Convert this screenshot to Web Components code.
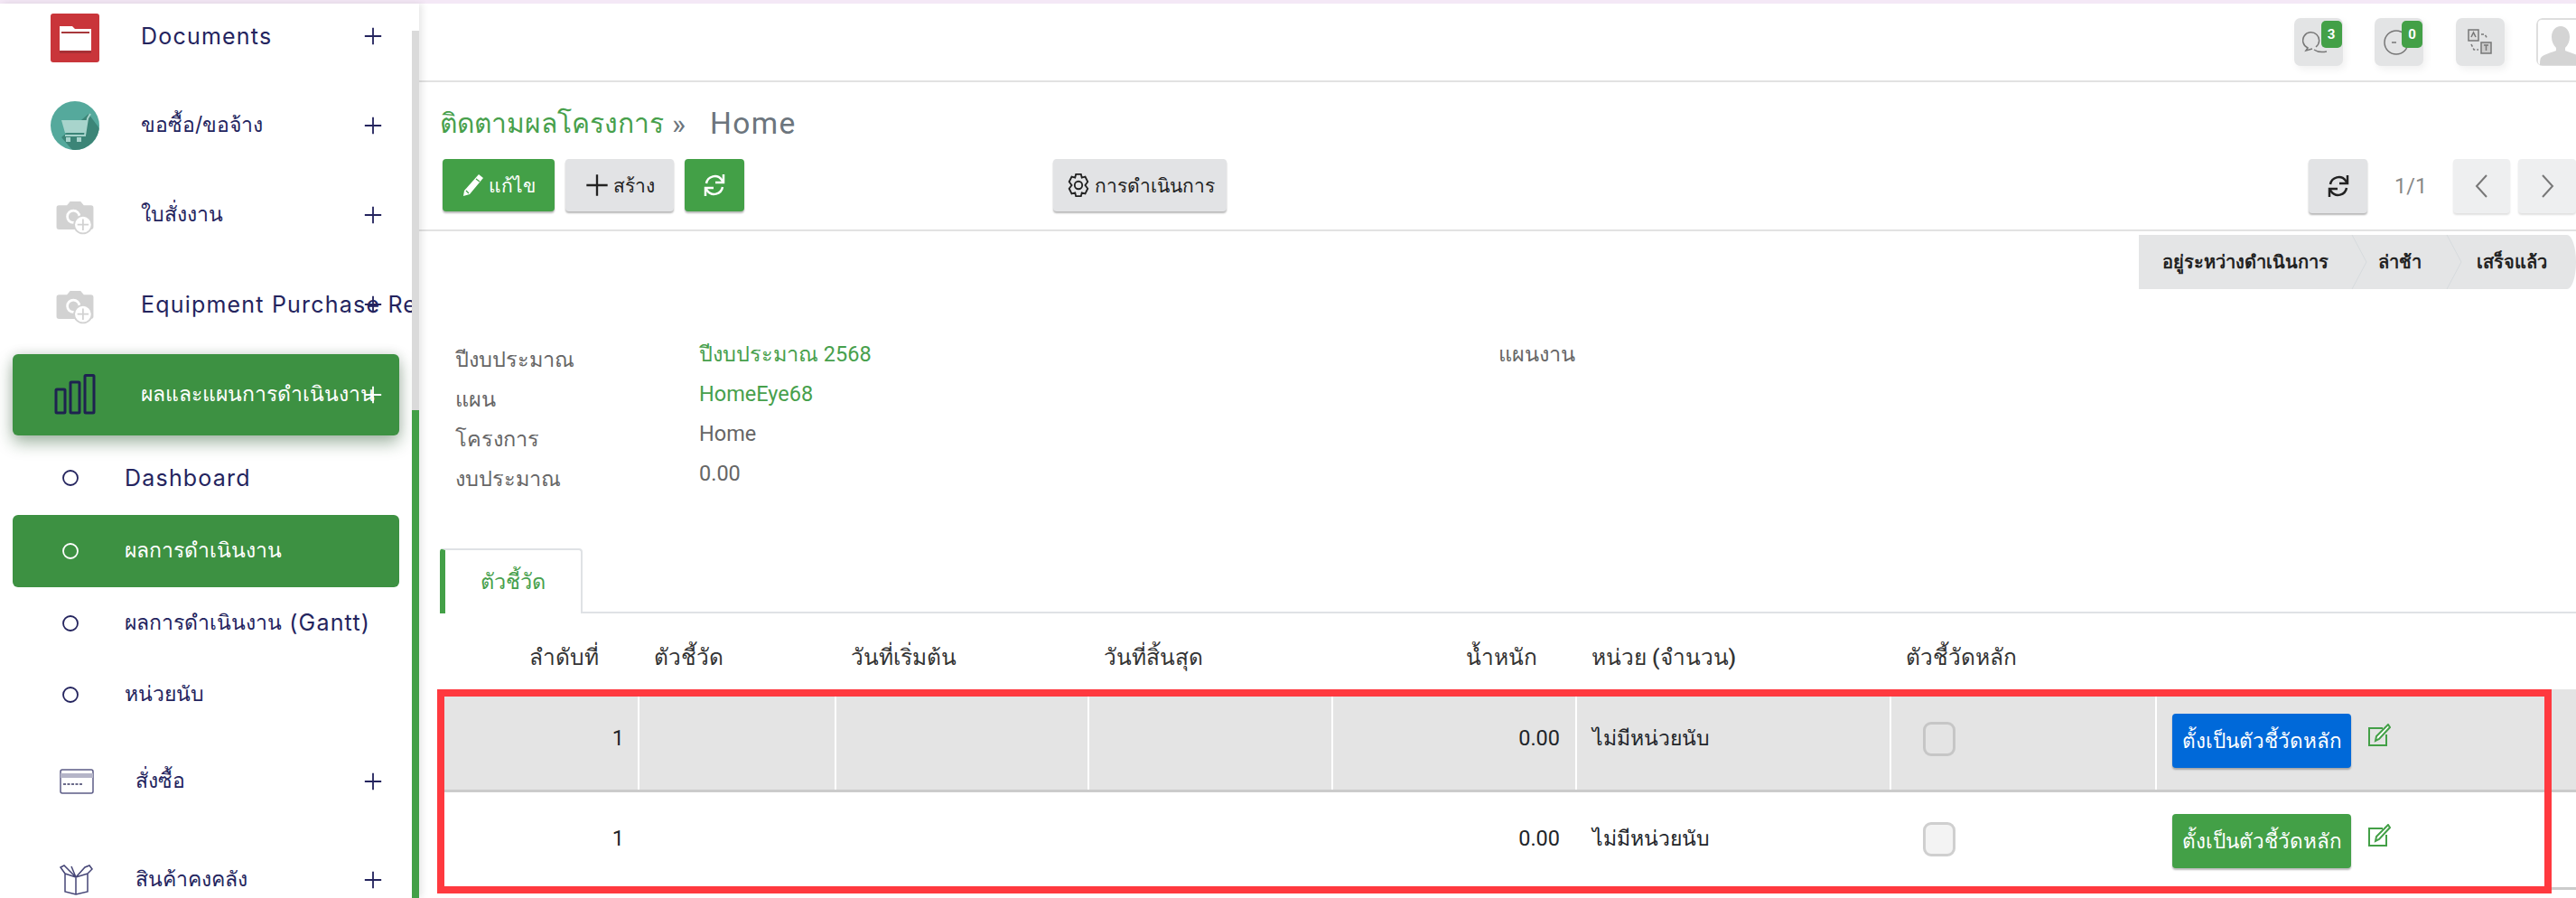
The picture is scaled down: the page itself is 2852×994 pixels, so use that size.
<!DOCTYPE html>
<html lang="th">
<head>
<meta charset="utf-8">
<title>ติดตามผลโครงการ</title>
<style>
    html, body { margin: 0; height: 100%; background: #fff; overflow: hidden; }
    body { font-family: Roboto, "Noto Sans", sans-serif; }
</style>
</head>
<body>
<x-app>
    <x-sidebar slot="side">
        <x-nav-item label="Documents" plus x="142" style="margin-top:-14px"><x-ico name="docs"></x-ico></x-nav-item>
        <x-nav-item label="ขอซื้อ/ขอจ้าง" plus x="142"><x-ico name="cart"></x-ico></x-nav-item>
        <x-nav-item label="ใบสั่งงาน" plus x="142"><x-ico name="cam"></x-ico></x-nav-item>
        <x-nav-item label="Equipment Purchase Request" plus x="142"><x-ico name="cam"></x-ico></x-nav-item>
        <x-nav-item label="ผลและแผนการดำเนินงาน" plus x="142" active raised style="margin-top:6px;height:90px"><x-ico name="bars"></x-ico></x-nav-item>
        <x-nav-item label="Dashboard" x="124" style="margin-top:7px;height:80px"><x-ico name="dot"></x-ico></x-nav-item>
        <x-nav-item label="ผลการดำเนินงาน" x="124" active style="margin-top:1px;height:80px"><x-ico name="dot"></x-ico></x-nav-item>
        <x-nav-item label="ผลการดำเนินงาน (Gantt)" x="124" style="height:79px"><x-ico name="dot"></x-ico></x-nav-item>
        <x-nav-item label="หน่วยนับ" x="124" style="height:80px"><x-ico name="dot"></x-ico></x-nav-item>
        <x-nav-item label="สั่งซื้อ" plus x="136" style="margin-top:6px"><x-ico name="card"></x-ico></x-nav-item>
        <x-nav-item label="สินค้าคงคลัง" plus x="136" style="margin-top:10px"><x-ico name="box"></x-ico></x-nav-item>
    </x-sidebar>

    <x-topbar>
        <x-top-icon name="chat" badge="3"></x-top-icon>
        <x-top-icon name="clock" badge="0"></x-top-icon>
        <x-top-icon name="lang"></x-top-icon>
        <x-top-icon name="user"></x-top-icon>
    </x-topbar>

    <x-control-panel>
        <span slot="crumb">ติดตามผลโครงการ</span>
        <x-btn kind="green" w="124"><x-ico name="pencil" size="26"></x-ico>แก้ไข</x-btn>
        <x-btn kind="gray" w="120"><x-ico name="plus" size="28"></x-ico>สร้าง</x-btn>
        <x-btn kind="green" w="66"><x-ico name="sync" size="30"></x-ico></x-btn>
        <x-btn kind="gray" w="192" style="margin-left:330px"><x-ico name="gear" size="28"></x-ico>การดำเนินการ</x-btn>
        <x-btn slot="pager" kind="gray" w="65" style="height:60px"><x-ico name="sync" size="30"></x-ico></x-btn>
        <span slot="pager" class="count">1/1</span>
        <x-btn slot="pager" kind="pale" w="63" style="height:60px"><x-ico name="prev" size="26"></x-ico></x-btn>
        <x-btn slot="pager" kind="pale" w="64" style="height:60px"><x-ico name="next" size="26"></x-ico></x-btn>
    </x-control-panel>

    <x-status-bar>
        <x-status-step w="236">อยู่ระหว่างดำเนินการ</x-status-step>
        <x-status-step w="105">ล่าช้า</x-status-step>
        <x-status-step w="143" last>เสร็จแล้ว</x-status-step>
    </x-status-bar>

    <x-fields>
        <x-field label="ปีงบประมาณ" kind="link">ปีงบประมาณ 2568</x-field>
        <x-field label="แผนงาน" second></x-field>
        <x-field label="แผน" kind="link">HomeEye68</x-field>
        <x-field label="โครงการ">Home</x-field>
        <x-field label="งบประมาณ">0.00</x-field>
    </x-fields>

    <x-tabs label="ตัวชี้วัด"></x-tabs>
    <x-kpi-table></x-kpi-table>
</x-app>

<script>
const NAVY = '#24245e'

const ICONS = {
    docs: `<svg viewBox="0 -2 54 54" width="54" height="54"><rect width="54" height="54" rx="3" fill="#c9353a"/><path d="M10 14h14l3 3h18v24H10z" fill="#fff"/><rect x="12" y="20" width="31" height="2" fill="#a8383c"/><rect x="10" y="41" width="35" height="3" fill="#a83035"/></svg>`,
    cart: `<svg viewBox="0 0 54 54" width="54" height="54"><defs><clipPath id="c"><circle cx="27" cy="27" r="27"/></clipPath></defs><circle cx="27" cy="27" r="27" fill="#55a99c"/><path d="M42 14 54 30v24H24L12 40z" fill="#3c8577" clip-path="url(#c)"/><path d="M12 21h29l-3 14H16z" fill="#a8d4cc"/><path d="M16 38h22l3-19 3-5" fill="none" stroke="#a8d4cc" stroke-width="2"/><rect x="17" y="40" width="5" height="5" fill="#a8d4cc"/><rect x="29" y="40" width="5" height="5" fill="#a8d4cc"/></svg>`,
    cam: `<svg viewBox="0 -3 54 54" width="48" height="48"><path d="M7 12h10l4-5h13l4 5h9a3 3 0 0 1 3 3v24a3 3 0 0 1-3 3H7a3 3 0 0 1-3-3V15a3 3 0 0 1 3-3z" fill="#d2d2d2"/><circle cx="25" cy="26" r="9" fill="#fff"/><circle cx="25" cy="26" r="6" fill="#d2d2d2"/><circle cx="37" cy="36" r="11" fill="#fff" stroke="#d2d2d2" stroke-width="2"/><path d="M37 29v14M30 36h14" stroke="#d2d2d2" stroke-width="2"/></svg>`,
    bars: `<svg viewBox="0 0 46 46" width="46" height="46" fill="none" stroke="#1e2250" stroke-width="3"><rect x="2" y="17" width="10" height="26" rx="1"/><rect x="18" y="9" width="10" height="34" rx="1"/><rect x="34" y="1.500" width="10" height="41.500" rx="1"/></svg>`,
    dot: `<svg viewBox="0 0 18 18" width="18" height="18" fill="none" stroke="currentColor" stroke-width="1.800"><circle cx="9" cy="9" r="8"/></svg>`,
    card: `<svg viewBox="0 0 38 28" width="38" height="28" fill="none"><rect x="1" y="1" width="36" height="26" rx="2" stroke="${NAVY}" stroke-opacity=".75" stroke-width="1.500"/><rect x="1" y="5" width="36" height="5" fill="#b5b5c8"/><path d="M4 17h22" stroke="#6a6a8a" stroke-width="2" stroke-dasharray="3 1.500"/></svg>`,
    box: `<svg viewBox="0 0 38 34" width="38" height="34" fill="none" stroke="${NAVY}" stroke-opacity=".85" stroke-width="1.500"><path d="M6 10v20l12 3 13-3V10M6 10l12 4 13-4M18 14v19M6 10 1 3l4-2 13 13M31 10l5-5-3-4-5 2-10 11M18 14l-5-12"/></svg>`,
    plus: `<svg viewBox="0 0 24 24" width="100%" height="100%" fill="none" stroke="currentColor" stroke-width="2"><path d="M12 2v20M2 12h20"/></svg>`,
    pencil: `<svg viewBox="0 0 24 26" width="100%" height="100%"><path d="M18 1l5 4L8 23l-7 2 1-6z" fill="#fff"/><path d="M15 6l4 3M4 19l3 3" stroke="#43a047" stroke-width="1.300"/></svg>`,
    sync: `<svg viewBox="0 0 30 30" width="100%" height="100%" fill="none" stroke="currentColor" stroke-width="2.500"><path d="M6 13a9.500 9.500 0 0 1 17-4l2 3"/><path d="M25 3v9h-9"/><path d="M24 17a9.500 9.500 0 0 1-17 4l-2-3"/><path d="M5 27v-9h9"/></svg>`,
    gear: `<svg viewBox="0 0 26 30" width="100%" height="100%" fill="none" stroke="#222" stroke-width="2"><path d="M10 2h6l1 4 4-1 3 6-3 4 3 4-3 6-4-1-1 4h-6l-1-4-4 1-3-6 3-4-3-4 3-6 4 1z"/><circle cx="13" cy="15" r="4.500"/></svg>`,
    prev: `<svg viewBox="0 0 26 26" width="100%" height="100%" fill="none" stroke="#777" stroke-width="2"><path d="M18 1 7 13l11 12"/></svg>`,
    next: `<svg viewBox="0 0 26 26" width="100%" height="100%" fill="none" stroke="#777" stroke-width="2"><path d="M8 1l11 12L8 25"/></svg>`,
    edit: `<svg viewBox="0 0 26 26" width="26" height="26" fill="none" stroke="#43a047" stroke-width="2"><path d="M17 5H2v19h19V12"/><path d="M23 1l2 3L13 17l-4 2 1-5z" fill="#fff"/></svg>`,
    chat: `<svg viewBox="0 0 30 28" width="30" height="28" fill="none" stroke="#777" stroke-width="1.500"><path d="M15 19a9 9 0 1 0-9 1l-2 3 7-2"/><path d="M13 22c4 3 9 3 14 2"/></svg>`,
    clock: `<svg viewBox="0 0 30 30" width="30" height="30" fill="none" stroke="#777" stroke-width="1.500"><circle cx="15" cy="15" r="13"/><path d="M10 15h5"/></svg>`,
    lang: `<svg viewBox="0 0 28 30" width="28" height="30" fill="none" stroke="#777" stroke-width="1.500"><rect x="1" y="1" width="11" height="12" fill="#ddd"/><rect x="15" y="15" width="11" height="12" fill="#ccc"/><path d="M4 9l2.500-5L9 9M18 18h5M20.500 18v6"/><path d="M15 6h4l3 5M4 17l3 6h5" stroke-dasharray="3 2"/></svg>`,
    user: `<svg viewBox="0 0 54 54" width="54" height="54"><rect x="1" y="1" width="60" height="52" rx="5" fill="#fff" stroke="#dedede" stroke-width="2"/><path d="M27 9c6 0 10 5 10 12 0 5-2 9-5 12v3c4 2 14 4 17 8 1 2 1 6 1 8H4c0-2 0-6 1-8 3-4 13-6 17-8v-3c-3-3-5-7-5-12 0-7 4-12 10-12z" fill="#d4d4d4"/></svg>`,
}

class Shadowed extends HTMLElement {
    static css = ''
    render () { return '<slot></slot>' }
    connectedCallback () {
        if (this.shadowRoot) return
        const template = document.createElement('template')
        template.innerHTML = `<style>${this.constructor.css}</style>${this.render()}`
        this.attachShadow({mode: 'open'}).appendChild(template.content)
    }
}

customElements.define('x-ico', class extends Shadowed {
    static css = `
        :host { display: inline-flex; align-items: center; justify-content: center; flex: none; }
        svg { overflow: visible; }
    `
    render () {
        const size = this.getAttribute('size')
        if (size) this.style.width = this.style.height = size + 'px'
        return ICONS[this.getAttribute('name')]
    }
})

customElements.define('x-app', class extends Shadowed {
    static css = `
        :host { display: grid; grid-template-columns: 464px 1fr; height: 100%; border-top: 4px solid #f4e8f6; box-sizing: border-box; }
        .side { height: 100%; overflow: hidden; box-shadow: 3px 0 8px rgba(0,0,0,.1); position: relative; z-index: 1; }
        .main { display: flex; flex-direction: column; min-width: 0; height: 100%; overflow: hidden; }
    `
    render () { return `<div class="side"><slot name="side"></slot></div><div class="main"><slot></slot></div>` }
})

customElements.define('x-sidebar', class extends Shadowed {
    static css = `
        :host { display: grid; grid-template-columns: 456px 8px; height: 100%; font-family: Inter, "Noto Sans", sans-serif; }
        nav { overflow: hidden; display: flex; flex-direction: column; height: 100%; }
        .bar { background: linear-gradient(#fff 30px, #dadada 30px, #dadada 450px, #43a047 450px); }
    `
    render () { return `<nav><slot></slot></nav><div class="bar"></div>` }
})

customElements.define('x-nav-item', class extends Shadowed {
    static css = `
        :host { display: flex; align-items: center; flex: none; position: relative; height: 99px; margin: 0 14px; width: 428px; color: ${NAVY}; font-size: 23px; border-radius: 6px; white-space: nowrap; }
        :host([active]) { background: #3d9142; color: #fff; }
        :host([raised]) { box-shadow: 0 8px 18px rgba(20,70,25,.4), 0 -2px 12px rgba(0,0,0,.08); }
        .icon { flex: none; display: flex; align-items: center; justify-content: center; }
        .text { margin-bottom: 2px; }
        .latin { font-size: 25px; letter-spacing: 1.200px; position: relative; top: 1px; }
        .plus { position: absolute; left: 388px; top: 50%; width: 22px; height: 22px; margin-top: -11px; }
    `
    render () {
        const x = +this.getAttribute('x')
        const c = x === 142 ? 69 : x === 124 ? 64 : 71
        const label = this.getAttribute('label').replace(/[A-Za-z() ]+/g, m => `<span class="latin">${m}</span>`)
        return `<span class="icon" style="margin-left:${c - 40}px;width:80px;margin-right:${x - c - 40}px"><slot></slot></span>
            <span class="text">${label}</span>
            ${this.hasAttribute('plus') ? `<span class="plus">${ICONS.plus}</span>` : ''}`
    }
})

customElements.define('x-topbar', class extends Shadowed {
    static css = `:host { display: flex; justify-content: flex-end; gap: 35.500px; flex: none; height: 87px; box-sizing: border-box; padding: 16px 0 0; margin-right: -10px; border-bottom: 2px solid #e2e2e2; }`
})

customElements.define('x-top-icon', class extends Shadowed {
    static css = `
        :host { display: flex; align-items: center; justify-content: center; position: relative; width: 54px; height: 53px; background: #e3e4e5; border-radius: 7px; box-shadow: 3px 4px 8px rgba(0,0,0,.06); }
        :host([name=user]) { background: #fff; box-shadow: none; overflow: hidden; }
        .badge { position: absolute; top: 3px; right: 1px; background: #43a047; color: #fff; font: 700 15px/1 Roboto, sans-serif; border-radius: 5px; width: 23px; height: 30px; display: flex; align-items: center; justify-content: center; }
        svg { margin-right: 6px; }
        :host([name=user]) svg { margin: 0; }
        :host([name=lang]) svg { margin: 0; }
    `
    render () {
        const badge = this.getAttribute('badge')
        return ICONS[this.getAttribute('name')] + (badge ? `<span class="badge">${badge}</span>` : '')
    }
})

customElements.define('x-control-panel', class extends Shadowed {
    static css = `
        :host { display: block; flex: none; padding: 26px 0 18px 23px; border-bottom: 2px solid #e2e2e2; }
        .crumb { font-size: 30px; line-height: 40px; height: 40px; color: #6c757d; white-space: nowrap; display: flex; }
        .crumb ::slotted(span) { color: #47a04c; }
        .sep { width: 42px; padding-left: 9px; font-size: 32px; }
        .home { font-size: 33.500px; letter-spacing: 1.400px; }
        .rows { display: flex; align-items: flex-start; margin-top: 19px; padding-left: 3px; height: 60px; }
        .left { display: flex; gap: 12px; }
        .pager { margin-left: auto; display: flex; gap: 9px; align-items: center; color: #888; font-size: 23.500px; }
        .pager ::slotted(.count) { margin: 0 21px; width: 35px; text-align: center; }
    `
    render () {
        return `<div class="crumb"><slot name="crumb"></slot><span class="sep">»</span><span class="home">Home</span></div>
            <div class="rows"><div class="left"><slot></slot></div><div class="pager"><slot name="pager"></slot></div></div>`
    }
})

customElements.define('x-btn', class extends Shadowed {
    static css = `
        :host { display: inline-flex; align-items: center; justify-content: center; gap: 4px; box-sizing: border-box; height: 58px; border-radius: 4px; font-size: 21px; font-weight: 500; flex: none; box-shadow: 0 2px 2px rgba(0,0,0,.28); white-space: nowrap; }
        :host([kind=green]) { background: #43a047; color: #fff; }
        :host([kind=gray]) { background: #e2e3e5; color: #222; }
        :host([kind=pale]) { background: #eeeff0; color: #777; box-shadow: 0 2px 2px rgba(0,0,0,.12); }
        :host([kind=blue]) { background: #0069d9; color: #fff; }
    `
    render () {
        this.style.width = this.getAttribute('w') + 'px'
        return '<slot></slot>'
    }
})

customElements.define('x-status-bar', class extends Shadowed {
    static css = `
        :host { display: flex; flex: none; align-self: flex-end; height: 60px; margin-top: 4px; background: #e4e5e6; color: #222; font-size: 20px; font-weight: 700; border-radius: 0 10px 10px 0 / 0 30px 30px 0; }
    `
})

customElements.define('x-status-step', class extends Shadowed {
    static css = `
        :host { display: flex; align-items: center; justify-content: center; position: relative; box-sizing: border-box; height: 60px; white-space: nowrap; }
        svg { position: absolute; right: -17px; top: 0; }
    `
    render () {
        this.style.width = this.getAttribute('w') + 'px'
        return `<slot></slot>` + (this.hasAttribute('last') ? '' : `<svg width="18" height="60" fill="none" stroke="#d6dadd"><path d="M1 0l16 30L1 60"/></svg>`)
    }
})

customElements.define('x-fields', class extends Shadowed {
    static css = `
        :host { display: grid; grid-template-columns: 270px 885px 1fr; grid-auto-rows: 44px; flex: none; margin: 56px 0 55px 40px; font-size: 23.500px; color: #666; }
    `
})

customElements.define('x-field', class extends Shadowed {
    static css = `
        :host { display: contents; }
        .l { grid-column: 1; padding-top: 6px; line-height: 32px; white-space: nowrap; }
        .v { grid-column: 2; line-height: 32px; height: 44px; }
        :host([kind=link]) .v { color: #47a04c; }
        :host([second]) .l { grid-column: 3; grid-row: 1; padding-top: 0; }
    `
    render () {
        const label = `<div class="l">${this.getAttribute('label')}</div>`
        return this.hasAttribute('second') ? label : `${label}<div class="v"><slot></slot></div>`
    }
})

customElements.define('x-tabs', class extends Shadowed {
    static css = `
        :host { display: flex; flex: none; margin-left: 23px; height: 72px; box-sizing: border-box; border-bottom: 2px solid #dfe2e5; }
        .tab { width: 158px; height: 72px; box-sizing: border-box; border-left: 6px solid #43a047; border-top: 2px solid #dfe2e5; border-right: 2px solid #dfe2e5; border-radius: 4px 4px 0 0; background: #fff; color: #47a04c; font-size: 23.500px; display: flex; align-items: center; justify-content: center; padding-bottom: 2px; }
    `
    render () { return `<div class="tab">${this.getAttribute('label')}</div>` }
})

customElements.define('x-kpi-table', class extends Shadowed {
    static css = `
        :host { display: block; position: relative; flex: none; margin-left: 23px; font-size: 23.500px; color: #212529; }
        table { border-collapse: collapse; table-layout: fixed; width: 2365px; }
        th { height: 84px; box-sizing: border-box; font-size: 24.500px; font-weight: 500; text-align: left; padding: 12px 17px 0; color: #333; white-space: nowrap; }
        th.r { text-align: right; }
        th.first { padding-right: 44px; }
        th.w { padding-right: 43px; }
        td { height: 108px; box-sizing: border-box; padding: 0 17px; border-left: 2px solid #fff; white-space: nowrap; }
        td.r { text-align: right; }
        td.t { padding-bottom: 2px; }
        td.n { padding-right: 15px; }
        td.u { font-size: 23px; }
        td.b { padding-top: 3px; }
        tr.sel td { background: #e4e4e4; height: 112px; }
        tr.sel td, tr:last-child td { border-bottom: 3px solid #cbcbcb; }
        td:first-child { border-left: 0; }
        .check { display: block; width: 36px; height: 38px; margin-left: 18px; box-sizing: border-box; border: 3px solid #cfcfcf; border-radius: 9px; background: #f3f3f3; }
        tr.sel .check { background: #e4e4e4; border-color: #c6c6c6; }
        .act { display: flex; align-items: center; gap: 18px; }
        .act svg { margin-top: -12px; }
        .mark { position: absolute; left: -3px; top: 84px; width: 2341px; height: 226px; box-sizing: border-box; border: 8px solid #ff393f; pointer-events: none; }
        x-btn { font-size: 22.500px; }
    `
    row (cls, kind) {
        return `<tr class="${cls}"><td class="r t n">1</td><td></td><td></td><td></td><td class="r t">0.00</td><td class="t u">ไม่มีหน่วยนับ</td>
            <td><span class="check"></span></td>
            <td class="b"><div class="act"><x-btn kind="${kind}" w="198" style="height:60px">ตั้งเป็นตัวชี้วัดหลัก</x-btn>${ICONS.edit}</div></td></tr>`
    }
    render () {
        return `<table>
            <colgroup><col style="width:220px"><col style="width:218px"><col style="width:280px"><col style="width:270px"><col style="width:270px"><col style="width:348px"><col style="width:294px"><col></colgroup>
            <thead><tr><th class="r first">ลำดับที่</th><th>ตัวชี้วัด</th><th>วันที่เริ่มต้น</th><th>วันที่สิ้นสุด</th><th class="r w">น้ำหนัก</th><th>หน่วย (จำนวน)</th><th>ตัวชี้วัดหลัก</th><th></th></tr></thead>
            <tbody>${this.row('sel', 'blue')}${this.row('', 'green')}</tbody>
        </table><div class="mark"></div>`
    }
})
</script>
</body>
</html>
